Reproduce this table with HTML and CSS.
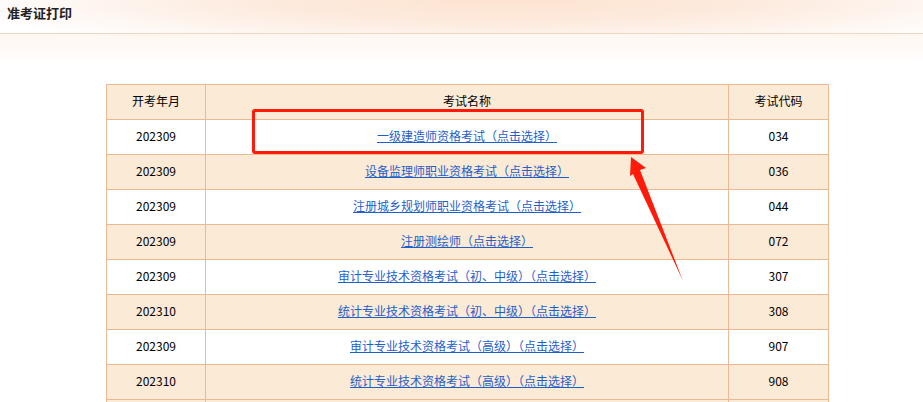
FILE: index.html
```html
<!DOCTYPE html>
<html lang="zh-CN">
<head>
  <meta charset="UTF-8" />
  <title>准考证打印</title>
  <link rel="stylesheet" href="styles.css">
</head>
<body>
  <div class="topbar">
    <h1>准考证打印</h1>
  </div>
  <div class="fade"></div>

  <div class="content">
    <table class="exam-table">
      <colgroup>
        <col class="c-date" />
        <col class="c-name" />
        <col class="c-code" />
      </colgroup>
      <tr class="head">
        <th>开考年月</th>
        <th>考试名称</th>
        <th>考试代码</th>
      </tr>
      <tr>
        <td>202309</td>
        <td><a href="#">一级建造师资格考试（点击选择）</a></td>
        <td>034</td>
      </tr>
      <tr class="alt">
        <td>202309</td>
        <td><a href="#">设备监理师职业资格考试（点击选择）</a></td>
        <td>036</td>
      </tr>
      <tr>
        <td>202309</td>
        <td><a href="#">注册城乡规划师职业资格考试（点击选择）</a></td>
        <td>044</td>
      </tr>
      <tr class="alt">
        <td>202309</td>
        <td><a href="#">注册测绘师（点击选择）</a></td>
        <td>072</td>
      </tr>
      <tr>
        <td>202309</td>
        <td><a href="#">审计专业技术资格考试（初、中级）（点击选择）</a></td>
        <td>307</td>
      </tr>
      <tr class="alt">
        <td>202310</td>
        <td><a href="#">统计专业技术资格考试（初、中级）（点击选择）</a></td>
        <td>308</td>
      </tr>
      <tr>
        <td>202309</td>
        <td><a href="#">审计专业技术资格考试（高级）（点击选择）</a></td>
        <td>907</td>
      </tr>
      <tr class="alt">
        <td>202310</td>
        <td><a href="#">统计专业技术资格考试（高级）（点击选择）</a></td>
        <td>908</td>
      </tr>
      <tr class="alt">
        <td></td>
        <td></td>
        <td></td>
      </tr>
    </table>
  </div>

  <!-- annotation drawn over the table -->
  <div class="mark-box"></div>
  <svg class="mark-arrow" width="923" height="402" viewBox="0 0 923 402">
    <polygon points="631,157 646,168 640,170 683,281 633,174 630,176" fill="#ff1a0a" />
  </svg>
</body>
</html>
```

FILE: styles.css
```css
body {
  margin: 0;
  font-family: "Noto Sans CJK SC", "Noto Sans", sans-serif;
  font-size: 12px;
  color: #000;
  background: #fff;
  overflow: hidden;
  height: 402px;
}
.topbar {
  height: 33px;
  border-bottom: 1px solid #f0d9c4;
  background: radial-gradient(ellipse 62% 160% at 55% 0%, #fde3cf 0%, #fdebdf 45%, #fff 100%);
}
.topbar h1 {
  margin: 0;
  padding: 3px 0 0 7px;
  font-size: 13px;
  font-weight: bold;
  color: #222;
}
.fade {
  height: 30px;
  background: linear-gradient(#fff6f0, #fff);
}
.content {
  padding: 20px 0 0 106px;
}
.exam-table {
  border-collapse: collapse;
  width: 723px;
  table-layout: fixed;
}
.c-date { width: 99px; }
.c-name { width: 523px; }
.c-code { width: 100px; }
.exam-table th,
.exam-table td {
  height: 31px;
  padding: 0 0 3px;
  border: 1px solid #ecb995;
  text-align: center;
  font-weight: normal;
  font-size: 12px;
}
.exam-table tr.head,
.exam-table tr.alt {
  background: #fbead6;
}
.exam-table a {
  color: #1f5fc8;
  text-decoration: underline;
}
.mark-box {
  position: absolute;
  left: 252px;
  top: 109px;
  width: 386px;
  height: 39px;
  border: 3px solid #ff1a0a;
  border-radius: 3px;
}
.mark-arrow {
  position: absolute;
  left: 0;
  top: 0;
}
```
